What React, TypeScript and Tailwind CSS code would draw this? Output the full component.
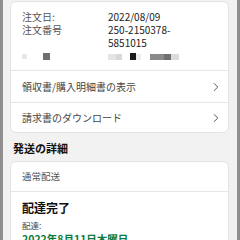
import React from 'react';
import { ChevronRight } from 'lucide-react';

const font = { fontFamily: '"Noto Sans CJK JP", "Noto Sans", sans-serif' };

const LinkRow: React.FC<{ label: string; border?: boolean; h: string }> = ({ label, border, h }) => (
  <div className={`flex items-center justify-between pl-[11px] pr-[5px] ${h} ${border ? 'border-t border-[#e6e6e6]' : ''}`}>
    <span className="text-[10px] leading-[13px] text-[#444]">{label}</span>
    <ChevronRight size={14} strokeWidth={1.4} className="text-[#333]" />
  </div>
);

const App: React.FC = () => {
  return (
    <div className="w-[240px] h-[240px] overflow-hidden bg-[#8f8f8f] pl-[3px] pr-[3px]" style={font}>
      <div className="h-full bg-[#f2f2f2] pl-[7px] pr-[8px] pt-[1px]">
        <div className="bg-white border border-[#e3e3e3] rounded-[6px]">
          <div className="pt-[8px] pb-[10px] pl-[11px]">
            <div className="grid grid-cols-[86px_1fr] text-[10px] leading-[13px]">
              <span className="text-[#555]">注文日:</span>
              <span className="text-[#222]">2022/08/09</span>
              <span className="text-[#555]">注文番号</span>
              <span className="text-[#222]">
                250-2150378-
                <br />
                5851015
              </span>
            </div>
            <div className="flex items-center h-[7px] mt-[4px]">
              <div className="w-[5px] h-[5px] bg-[#e8e8e8]" />
              <div className="w-[7px] h-[7px] bg-[#707070] ml-[16px]" />
              <div className="w-[8px] h-[6px] bg-[#e4e4e4] ml-[58px]" />
              <div className="w-[6px] h-[6px] bg-[#d8d8d8]" />
              <div className="w-[6px] h-[7px] bg-[#1a1a1a] ml-[8px]" />
              <div className="w-[5px] h-[6px] bg-[#ececec]" />
              <div className="w-[14px] h-[6px] bg-[#8a8a8a] ml-[9px]" />
              <div className="w-[7px] h-[6px] bg-[#707070]" />
              <div className="w-[8px] h-[6px] bg-[#dcdcdc]" />
            </div>
          </div>
          <LinkRow label="領収書/購入明細書の表示" border h="h-[32px]" />
          <LinkRow label="請求書のダウンロード" border h="h-[30px]" />
        </div>

        <div className="pl-[3px] pt-[8px] pb-[5px] text-[11px] leading-[15px] font-bold text-[#111]">
          発送の詳細
        </div>

        <div className="bg-white border border-[#e3e3e3] rounded-[6px]">
          <div className="h-[29px] flex items-center pl-[11px] text-[9.5px] text-[#555]">通常配送</div>
          <div className="border-t border-[#e6e6e6] pl-[11px] pt-[8px]">
            <div className="text-[12px] leading-[16px] font-bold text-[#111]">配達完了</div>
            <div className="text-[8.5px] leading-[12px] text-[#444] mt-[3px]">配達:</div>
            <div className="text-[10.5px] leading-[14px] font-bold text-[#0b7a3b] mt-[1px]">2022年8月11日木曜日</div>
          </div>
        </div>
      </div>
    </div>
  );
};

export default App;
